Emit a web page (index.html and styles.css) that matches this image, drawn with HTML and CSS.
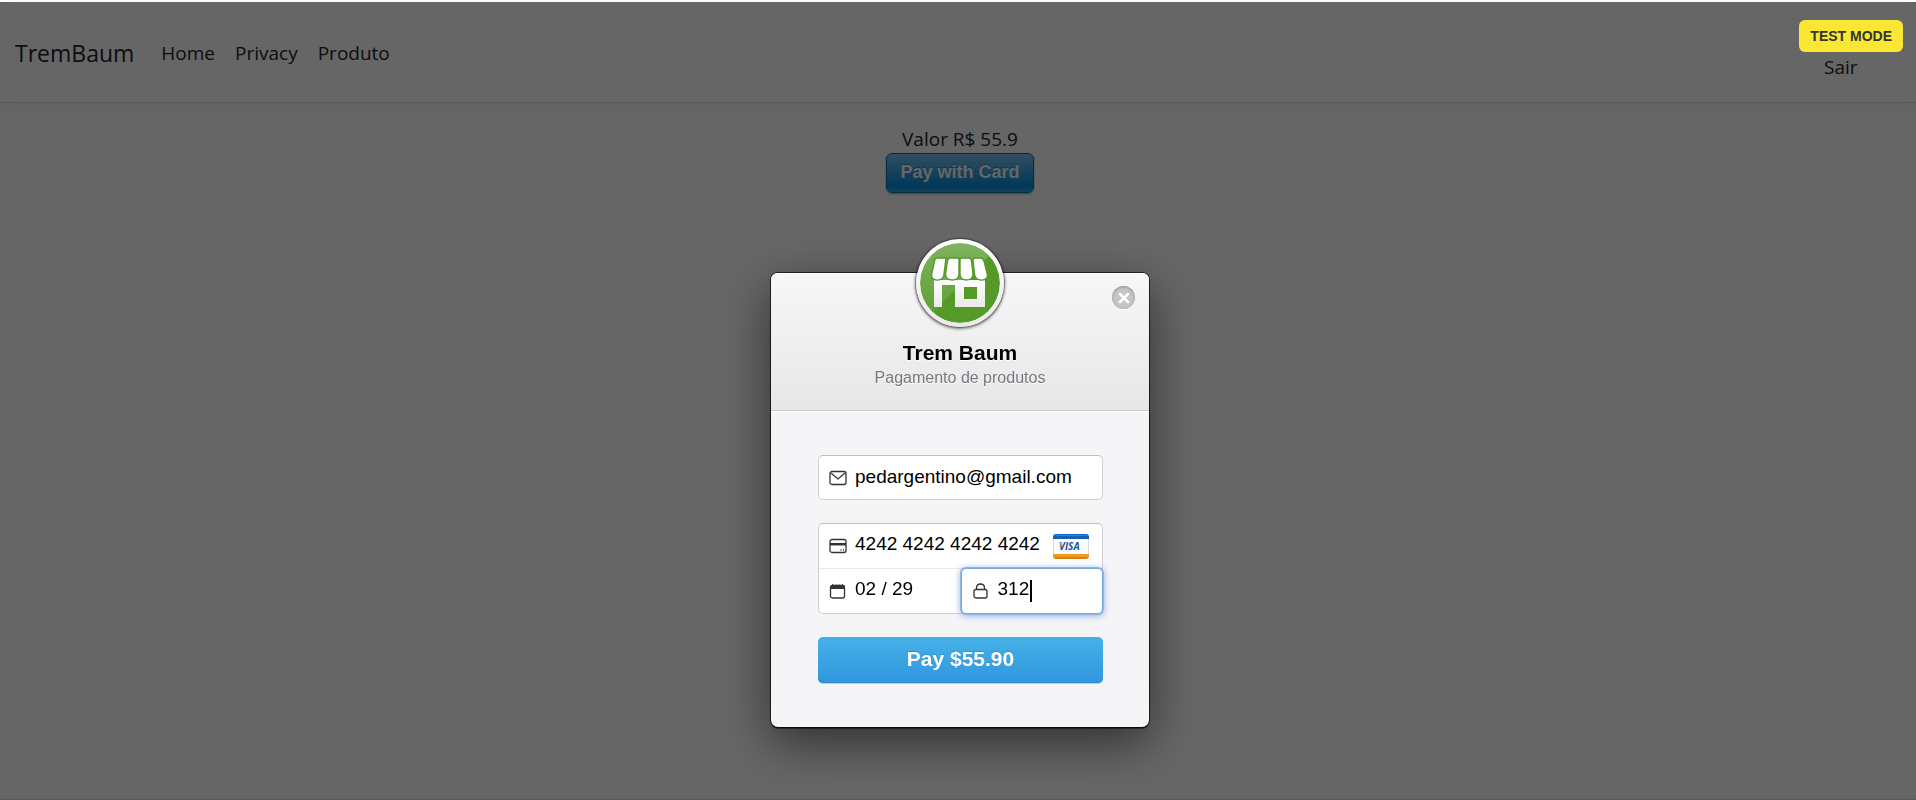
FILE: index.html
```html
<!DOCTYPE html>
<html lang="pt-BR">
<head>
<meta charset="utf-8">
<meta name="viewport" content="width=device-width, initial-scale=1">
<title>Produto - TremBaum</title>
<link rel="stylesheet" href="styles.css">
</head>
<body>
<div class="page">
  <header class="navbar">
    <a class="brand" href="#">TremBaum</a>
    <nav class="nav">
      <a href="#">Home</a>
      <a href="#">Privacy</a>
      <a href="#">Produto</a>
    </nav>
    <div class="account">
      <span class="account-name">o</span>
      <button class="logout" type="button">Sair</button>
    </div>
  </header>
  <main class="product">
    <p class="price">Valor R$ 55.9</p>
    <button class="card-button" type="button">Pay with Card</button>
  </main>
  <footer class="footer"></footer>
</div>
<div class="overlay">
  <span class="test-mode">TEST MODE</span>
  <section class="checkout" role="dialog" aria-labelledby="shop">
    <div class="checkout-head">
      <div class="logo">
        <svg viewBox="0 0 80 80" aria-hidden="true">
          <defs>
            <linearGradient id="wall" x1="0" y1="0" x2="0" y2="1"><stop offset="0" stop-color="#fff"/><stop offset="1" stop-color="#e9e9e9"/></linearGradient>
            <linearGradient id="shine" x1="0" y1="0" x2="0" y2="1"><stop offset="0" stop-color="#fff" stop-opacity=".25"/><stop offset="1" stop-color="#fff" stop-opacity=".04"/></linearGradient>
            <clipPath id="disc"><circle cx="40" cy="40" r="40"/></clipPath>
          </defs>
          <circle cx="40" cy="40" r="40" fill="#559a28"/>
          <path clip-path="url(#disc)" d="M0 0H80V2L4 78H0Z" fill="url(#shine)"/>
          <path fill="url(#wall)" d="M14 37H65V64H35V42H22V64H14ZM44 44V56H57V44Z" fill-rule="evenodd"/>
          <path fill="#fff" stroke="#559a28" stroke-width="1.4" d="M17 15H26L24 31C24 39 11 39 11.500 32L14.500 18Q15 15 17 15ZM30 15H39V31C39 39 25.500 39 25.500 31L27.500 18Q28 15 30 15ZM42 15H49Q51 15 51.500 18L53 31C53 39 40 39 40 31V17Q40 15 42 15ZM55 15H61Q63 15 64 18L67.500 32C68 39 55 39 54.500 31L53 17Q53 15 55 15Z"/>
        </svg>
      </div>
      <button class="close" type="button" aria-label="Fechar">
        <svg viewBox="0 0 12 12" aria-hidden="true"><path d="M2 2L10 10M10 2L2 10"/></svg>
      </button>
      <h1 id="shop">Trem Baum</h1>
      <p>Pagamento de produtos</p>
    </div>
    <form class="checkout-form">
      <label class="field email">
        <svg class="icon" viewBox="0 0 18 16" aria-hidden="true"><rect x="1" y="1.500" width="16" height="13" rx="2"/><path d="M2 3L9 9L16 3"/></svg>
        <input type="email" value="pedargentino@gmail.com" aria-label="Email">
      </label>
      <div class="card-fields">
        <label class="field number">
          <svg class="icon" viewBox="0 0 18 16" aria-hidden="true"><rect x="1" y="1.500" width="16" height="13" rx="2"/><path stroke-width="2.500" d="M1 6.200H17"/><path d="M11.500 12H12.500M14 12H15"/></svg>
          <input type="text" value="4242 4242 4242 4242" aria-label="Card number">
          <svg class="visa" viewBox="0 0 36 25" role="img" aria-label="Visa">
            <rect x=".5" y=".5" width="35" height="24" rx="2.500" fill="#fafbfd" stroke="#d5dce6"/>
            <path fill="#1462b8" d="M0 5V3Q0 0 3 0H33Q36 0 36 3V5Z"/><path fill="#2f80d1" d="M1 2Q1 1 3 1H33Q35 1 35 2Z"/>
            <path fill="#f09a20" d="M0 20H36V22Q36 25 33 25H3Q0 25 0 22Z"/><path fill="#d97f18" d="M1 23H35Q34 25 32 25H4Q2 25 1 23Z"/>
            <text x="6" y="16">VISA</text>
            <path fill="#efa22c" d="M6 9H9L10 12L8 11Z"/>
          </svg>
        </label>
        <label class="field expiry">
          <svg class="icon" viewBox="0 0 18 16" aria-hidden="true"><rect x="1.500" y="2.500" width="14" height="12.500" rx="2"/><path class="solid" d="M1 6V4Q1 2 3 2L3.500 .5L4.500 2H6.500L7 1L7.500 2H9.500L10 1L10.500 2H12.500L13.500 .5L14 2Q16 2 16 4V6Z"/></svg>
          <input type="text" value="02 / 29" aria-label="MM / YY">
        </label>
        <label class="field cvc">
          <svg class="icon" viewBox="0 0 18 16" aria-hidden="true"><rect x="2" y="6.500" width="13" height="8.500" rx="2"/><path d="M4.500 6.500V5Q4.500 1 8.500 1T12.500 5V6.500"/></svg>
          <input type="text" value="312" aria-label="CVC">
          <span class="caret"></span>
        </label>
      </div>
      <button class="pay" type="submit">Pay $55.90</button>
    </form>
  </section>
</div>
</body>
</html>
```
FILE: styles.css
```css
* { box-sizing: border-box; }
body { margin: 0; background: #fff; color: #212529; font-family: "Segoe UI", "Open Sans", sans-serif; font-size: 19px; line-height: 28px; }
h1, p { margin: 0; }
button, input { font: inherit; color: inherit; }
button { cursor: pointer; }

.page { display: flex; flex-direction: column; min-height: 100vh; padding-top: 2px; }
.navbar { display: flex; align-items: center; min-height: 101px; padding: 2px 12px 0 15px; border-bottom: 1px solid #dee2e6; box-shadow: 0 5px 15px rgba(0, 0, 0, .05); }
.navbar a { color: #212529; text-decoration: none; }
.brand { font-size: 23px; margin-right: 27px; }
.nav { display: flex; gap: 20px; flex: 1; }
.account { display: flex; flex-direction: column; align-items: flex-start; width: 80px; }
.account-name { align-self: flex-end; }
.logout { padding: 0; border: 0; background: none; }
.product { flex: 1; display: flex; flex-direction: column; align-items: center; padding: 23px 0 0 4px; }
.price { line-height: 27px; }
.card-button { width: 148px; height: 40px; padding: 0 0 2px; border: 1px solid #0b70a8; border-radius: 6px; background: linear-gradient(#7dc5ee, #008cdd 85%, #30a2e4); box-shadow: 0 1px 2px rgba(0, 0, 0, .4); color: #fff; font: bold 18px/24px "Liberation Sans", Arial, sans-serif; text-shadow: 0 -1px 0 rgba(0, 0, 0, .25); }
.footer { border-top: 1px solid #dee2e6; }

.overlay { position: fixed; inset: 2px 0 0; background: rgba(0, 0, 0, .6); display: flex; justify-content: center; align-items: flex-start; padding: 271px 0 0 4px; font-family: "Liberation Sans", Arial, sans-serif; color: #000; }
.test-mode { position: absolute; top: 18px; right: 13px; padding: 0 11px; line-height: 32px; border-radius: 6px; background: #f9e733; color: #333; font-size: 14px; font-weight: bold; }

.checkout { width: 378px; border-radius: 7px; background: #f5f5f7; box-shadow: 0 0 0 1px rgba(0, 0, 0, .65), 0 2px 1px rgba(0, 0, 0, .5), 0 15px 50px rgba(0, 0, 0, .55); }
.checkout-head { position: relative; height: 138px; padding-top: 66px; border-radius: 7px 7px 0 0; border-bottom: 1px solid #c8c8ca; background: linear-gradient(#f7f7f9, #e7e7e7); box-shadow: inset 0 1px 0 #fff, 0 1px 0 #fff; text-align: center; text-shadow: 0 1px 0 #fff; }
.checkout-head h1 { font-size: 21px; line-height: 28px; }
.checkout-head p { color: #77777f; font-size: 16px; line-height: 22px; }
.logo { position: absolute; top: -34px; left: 50%; width: 88px; height: 88px; margin-left: -44px; padding: 4px; border-radius: 50%; background: linear-gradient(#fff, #e9e9ea); box-shadow: 0 0 0 1px rgba(0, 0, 0, .25), 0 1px 3px 1px rgba(0, 0, 0, .5); }
.logo svg { display: block; width: 80px; height: 80px; border-radius: 50%; }
.close { position: absolute; top: 13px; right: 14px; display: grid; place-items: center; width: 23px; height: 23px; padding: 0; border: 0; border-radius: 50%; background: #c5c5c7; box-shadow: inset 0 1px 3px #929294, 0 1px 1px #fff; }
.close svg { width: 12px; height: 12px; stroke: #fff; stroke-width: 2.5; stroke-linecap: round; }

.checkout-form { display: flex; flex-direction: column; gap: 23px; padding: 44px 46px 44px 47px; }
.field { display: flex; align-items: center; min-width: 0; height: 45px; padding: 0 11px 0 10px; background: #fff; }
.field input { flex: 1; min-width: 0; width: 100%; padding: 0 0 2px; border: 0; outline: 0; background: none; font-size: 19px; line-height: 28px; }
.icon { flex: none; width: 18px; height: 16px; margin-right: 8px; fill: none; stroke: #333; stroke-width: 1.3; }
.icon .solid { fill: #333; stroke: none; }
.email, .card-fields { border: 1px solid #d0d0d3; border-top-color: #bfbfc2; border-radius: 5px; }
.card-fields { display: grid; grid-template-columns: 1fr 1fr; }
.number { grid-column: 1 / -1; border-bottom: 1px solid #ebebed; border-radius: 5px 5px 0 0; }
.expiry { height: 44px; border-radius: 0 0 0 5px; }
.number input, .cvc input, .expiry input { padding-bottom: 4px; }
.number .visa { flex: none; width: 36px; height: 25px; margin-right: 2px; }
.visa text { fill: #1b57a5; font: italic bold 10px "Open Sans", sans-serif; }
.cvc { position: relative; margin: -1px -1px -1px 0; height: 46px; border: 1px solid #7ba7e2; border-radius: 5px; box-shadow: 0 0 0 1px #8fb4e8, 0 1px 6px 1px rgba(80, 130, 220, .6); }
.caret { position: absolute; left: 68px; top: 11px; width: 2px; height: 22px; background: #000; }
.pay { height: 46px; padding: 0 0 3px; border: 0; border-radius: 5px; background: linear-gradient(#45b1e8, #3097de); box-shadow: inset 0 -1px 0 #2a86d0, 0 1px 0 #c3cbe8; color: #fff; font-size: 21px; font-weight: bold; line-height: 24px; text-shadow: 0 -1px 0 rgba(46, 86, 153, .3); }
```
